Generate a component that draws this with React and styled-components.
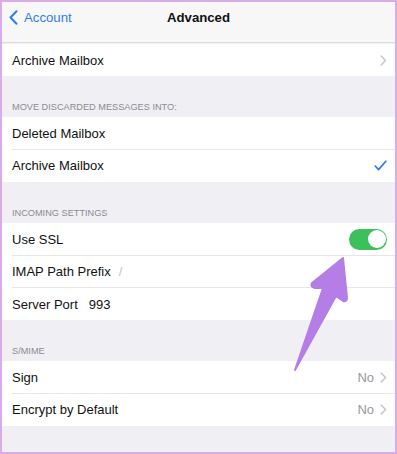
import React from "react";
import styled, { createGlobalStyle } from "styled-components";

const Global = createGlobalStyle`
  html, body { margin: 0; padding: 0; }
  body {
    font-family: "Liberation Sans", Arial, sans-serif;
    background: #ffffff;
  }
`;

const Frame = styled.div`
  position: relative;
  width: 397px;
  height: 454px;
  box-sizing: border-box;
  border: 2px solid #d9abe8;
  background: #f0eff4;
  overflow: hidden;
`;

const Nav = styled.div`
  height: 40px;
  display: flex;
  align-items: center;
  justify-content: center;
  position: relative;
  background: #f7f7f8;
  border-bottom: 1px solid #dcdce0;
  margin-bottom: 1px;
`;

const Back = styled.div`
  position: absolute;
  left: 7px;
  top: 8px;
  display: flex;
  align-items: center;
  gap: 6px;
  color: #2f7cf0;
  font-size: 13.2px;
`;

const Title = styled.div`
  font-weight: 700;
  font-size: 13.2px;
  color: #111;
  margin-top: -10px;
`;

const Group = styled.div`
  background: #ffffff;
`;

const Row = styled.div`
  height: 32.4px;
  display: flex;
  align-items: center;
  padding: 0 8px 0 10px;
  position: relative;
  font-size: 13px;
  color: #111;
  &:not(:last-child)::after {
    content: "";
    position: absolute;
    left: 10px;
    right: 0;
    bottom: 0;
    height: 1px;
    background: #e6e6ea;
  }
`;

const Label = styled.span`
  flex: 0 0 auto;
`;

const Inline = styled.span`
  margin-left: ${(p) => p.$gap || 8}px;
  color: ${(p) => (p.$muted ? "#c2c2c6" : "#111")};
`;

const Spacer = styled.span`
  flex: 1;
`;

const Value = styled.span`
  color: #98989c;
  margin-right: 6px;
`;

const Header = styled.div`
  height: 41px;
  display: flex;
  align-items: flex-end;
  padding: 0 10px 5px;
  box-sizing: border-box;
  font-size: 9.2px;
  color: #8b8b90;
  text-transform: uppercase;
`;

const Toggle = styled.div`
  width: 38px;
  height: 21px;
  border-radius: 11px;
  background: #3cc05c;
  position: relative;
  &::after {
    content: "";
    position: absolute;
    right: 1.5px;
    top: 1.5px;
    width: 18px;
    height: 18px;
    border-radius: 50%;
    background: #fff;
  }
`;

const Chevron = () => (
  <svg width="7" height="11" viewBox="0 0 7 11">
    <path d="M1.2 1 L5.5 5.5 L1.2 10" fill="none" stroke="#c6c6ca" strokeWidth="1.5" strokeLinecap="round" strokeLinejoin="round" />
  </svg>
);

const BackChevron = () => (
  <svg width="9" height="15" viewBox="0 0 9 15">
    <path d="M7.5 1.2 L1.5 7.5 L7.5 13.8" fill="none" stroke="#2f7cf0" strokeWidth="2" strokeLinecap="round" strokeLinejoin="round" />
  </svg>
);

const Check = () => (
  <svg width="13" height="11" viewBox="0 0 13 11">
    <path d="M1.2 6 L4.6 9.6 L11.8 1.2" fill="none" stroke="#3179ee" strokeWidth="1.7" strokeLinecap="round" strokeLinejoin="round" />
  </svg>
);

const Arrow = styled.svg`
  position: absolute;
  left: 0;
  top: 0;
  pointer-events: none;
`;

const App = () => {
  return (
    <>
      <Global />
      <Frame>
        <Nav>
          <Back>
            <BackChevron />
            <span>Account</span>
          </Back>
          <Title>Advanced</Title>
        </Nav>
        <Group>
          <Row>
            <Label>Archive Mailbox</Label>
            <Spacer />
            <Chevron />
          </Row>
        </Group>
        <Header>Move discarded messages into:</Header>
        <Group>
          <Row>
            <Label>Deleted Mailbox</Label>
          </Row>
          <Row>
            <Label>Archive Mailbox</Label>
            <Spacer />
            <Check />
          </Row>
        </Group>
        <Header>Incoming settings</Header>
        <Group>
          <Row>
            <Label>Use SSL</Label>
            <Spacer />
            <Toggle />
          </Row>
          <Row>
            <Label>IMAP Path Prefix</Label>
            <Inline $muted $gap={8}>/</Inline>
          </Row>
          <Row>
            <Label>Server Port</Label>
            <Inline $gap={11}>993</Inline>
          </Row>
        </Group>
        <Header>S/MIME</Header>
        <Group>
          <Row>
            <Label>Sign</Label>
            <Spacer />
            <Value>No</Value>
            <Chevron />
          </Row>
          <Row>
            <Label>Encrypt by Default</Label>
            <Spacer />
            <Value>No</Value>
            <Chevron />
          </Row>
        </Group>
        <Arrow width="397" height="454" viewBox="0 0 397 454">
          <path
            d="M341 256 L310 281 Q308 285 313 286 L321 286 L293 368 L334 294 L341 299 Q345 300 345 296 Z"
            fill="#b57de6"
            stroke="#b57de6"
            strokeWidth="2"
            strokeLinejoin="round"
          />
        </Arrow>
      </Frame>
    </>
  );
};

export default App;
